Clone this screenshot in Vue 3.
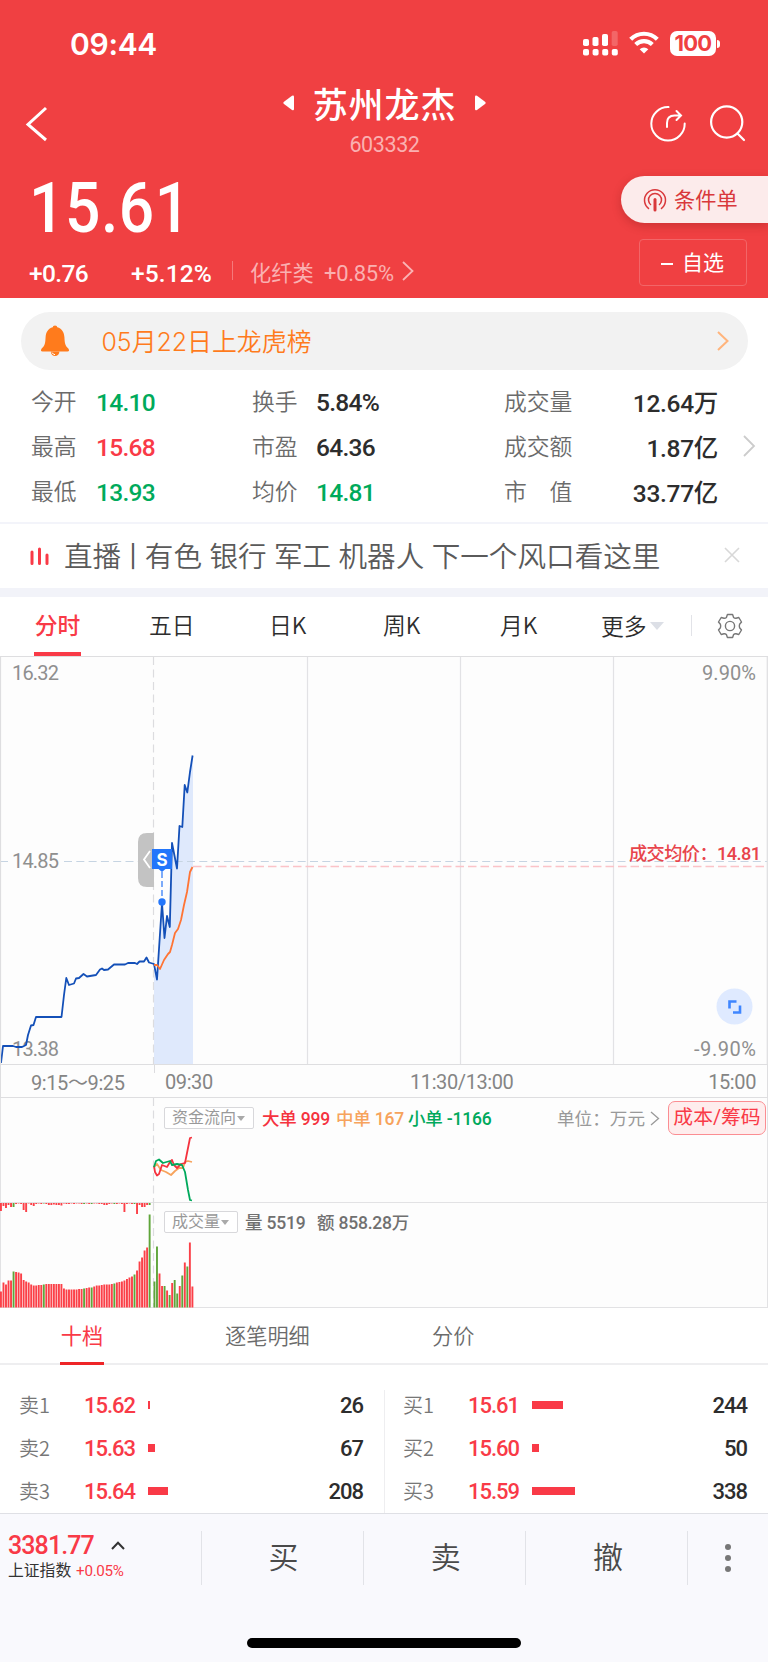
<template>
  <div class="page">
    <header class="header">
      <div class="status-bar">
        <span class="clock">09:44</span>
        <div class="status-icons">
          <svg width="36" height="26" viewBox="0 0 36 26" fill="#fff">
            <rect x="0" y="8" width="6" height="7" rx="1.8" />
            <rect x="9.500" y="6" width="6" height="9" rx="1.8" />
            <rect x="19" y="3" width="6" height="12" rx="1.8" />
            <rect x="28.700" y="0" width="6" height="15" rx="1.8" opacity="0.2" />
            <rect v-for="n in 4" :key="n" :x="(n - 1) * 9.6" y="18" width="6" height="6.500" rx="1.8" />
          </svg>
          <svg class="wifi" width="30" height="24" viewBox="0 0 30 24" fill="none" stroke="#fff" stroke-width="4.200">
            <path d="M1.700 8.200a19 19 0 0 1 26.600 0" />
            <path d="M6.700 13.500a12 12 0 0 1 16.600 0" />
            <path d="M15 22.500l-4.300-4.300a6.200 6.200 0 0 1 8.600 0z" fill="#fff" stroke="none" />
          </svg>
          <span class="battery">100</span>
          <span class="battery-tip"></span>
        </div>
      </div>

      <div class="nav">
        <svg class="back" width="24" height="36" viewBox="0 0 24 36" fill="none" stroke="#fff" stroke-width="3">
          <path d="M21 2L3 18.500L21 34" />
        </svg>
        <div class="nav-title">
          <div class="stock-name">
            <svg width="12" height="16" viewBox="0 0 12 16" fill="#fff"><path d="M1 6.800L9 .8Q11 0 11 2V14Q11 16 9 15L1 9Q-.3 8 1 6.800z" /></svg>
            <span>苏州龙杰</span>
            <svg width="12" height="16" viewBox="0 0 12 16" fill="#fff"><path d="M11 6.800L3 .8Q1 0 1 2V14Q1 16 3 15L11 9Q12.300 8 11 6.800z" /></svg>
          </div>
          <div class="stock-code">603332</div>
        </div>
        <div class="nav-icons">
          <svg width="38" height="38" viewBox="0 0 38 38" fill="none" stroke="#fff" stroke-width="2" stroke-linecap="round">
            <path d="M19.500 2.100A16.700 16.700 0 1 0 35.700 18.500" />
            <path d="M18 22V18Q18 10.500 25.500 10.500H31.500M27.500 6L32 10.500L27.500 15" />
          </svg>
          <svg width="38" height="38" viewBox="0 0 38 38" fill="none" stroke="#fff" stroke-width="2.200" stroke-linecap="round">
            <circle cx="17.700" cy="17" r="15.600" />
            <path d="M28.500 28.500L35 35" />
          </svg>
        </div>
      </div>

      <div class="quote">
        <div class="quote-left">
          <div class="price">15.61</div>
          <div class="change-row">
            <span class="change">+0.76</span>
            <span class="change pct">+5.12%</span>
            <i class="sep"></i>
            <span class="sector">化纤类</span>
            <span class="sector-pct">+0.85%</span>
            <svg width="12" height="20" viewBox="0 0 12 20" fill="none" stroke="#fab3b4" stroke-width="1.800"><path d="M1 1L10.500 10L1 19" /></svg>
          </div>
        </div>
        <div class="quote-actions">
          <button class="cond-btn">
            <svg width="24" height="24" viewBox="0 0 24 24" fill="none" stroke="#d9383b" stroke-width="1.500">
              <path d="M6 20.800A10.500 10.500 0 1 1 18 20.800" />
              <path d="M8 17A6.500 6.500 0 1 1 16 17" />
              <path d="M12 11.500V22" stroke-width="3" stroke-linecap="round" />
            </svg>
            <span>条件单</span>
          </button>
          <button class="fav-btn"><i></i><span>自选</span></button>
        </div>
      </div>
    </header>

    <div class="notice">
      <svg width="30" height="32" viewBox="0 0 30 32" fill="#ff7b1c">
        <circle cx="15" cy="2.800" r="2.300" />
        <path d="M15 2C21 2 24 6.500 24.400 12C24.700 18 25 20.500 28.500 23.800Q30 26.500 27.500 26.500H2.500Q0 26.500 1.500 23.800C5 20.500 5.300 18 5.600 12C6 6.500 9 2 15 2z" />
        <path d="M10.800 26.500a4.300 4.600 0 0 0 8.600 0z" />
        <path d="M12 27.500q1 2 3 2.200" fill="none" stroke="#fff" stroke-width="1" />
      </svg>
      <span>05月22日上龙虎榜</span>
      <svg class="notice-arrow" width="12" height="20" viewBox="0 0 12 20" fill="none" stroke="#ffb47c" stroke-width="2"><path d="M1 1L10.500 10L1 19" /></svg>
    </div>

    <section class="stats">
      <div v-for="(row, i) in stats" :key="i" class="stats-row">
        <template v-for="cell in row" :key="cell.label">
          <span class="label">{{ cell.label }}</span>
          <span class="value" :class="cell.tone">{{ cell.value }}</span>
        </template>
      </div>
      <svg class="stats-arrow" width="13" height="22" viewBox="0 0 13 22" fill="none" stroke="#ccc" stroke-width="1.800"><path d="M1 1L11 11L1 21" /></svg>
    </section>

    <div class="live">
      <svg width="20" height="20" viewBox="0 0 20 20" stroke="#f93a47" stroke-width="3" stroke-linecap="round"><path d="M2 6V17.500M9.500 3V17.500M17 9V17.500" /></svg>
      <p>直播<span class="bar">丨</span>有色 银行 军工 机器人 下一个风口看这里</p>
      <svg class="close" width="16" height="16" viewBox="0 0 16 16" stroke="#d8d8d8" stroke-width="1.600"><path d="M1 1L15 15M15 1L1 15" /></svg>
    </div>

    <nav class="period-tabs">
      <span v-for="tab in periods" :key="tab" :class="{ active: tab === '分时' }">{{ tab }}</span>
      <span class="more">更多<i></i></span>
      <svg class="gear" width="26" height="26" viewBox="0 0 26 26" fill="none" stroke="#777" stroke-width="1.400" stroke-linejoin="round">
        <circle cx="13" cy="13" r="4.600" />
        <path d="M10.400 1.500H15.600L16.600 4.500Q17.500 5.300 19 5.200L21.800 4.500L24.500 9L22.600 11.300Q22 13 22.600 14.700L24.500 17L21.800 21.500L19 20.800Q17.500 20.700 16.600 21.500L15.600 24.500H10.400L9.400 21.500Q8.500 20.700 7 20.800L4.200 21.500L1.500 17L3.400 14.700Q4 13 3.400 11.300L1.500 9L4.200 4.500L7 5.200Q8.500 5.300 9.400 4.500z" />
      </svg>
    </nav>

    <svg class="price-chart" width="768" height="408" viewBox="0 656 768 408">
      <g stroke="#e2e2e5" stroke-width="1.200">
        <path v-for="x in [307.5, 460.5, 613.5]" :key="x" :d="`M${x} 656V1064`" />
      </g>
      <path :d="areaPath" fill="#dfe9fc" />
      <path d="M153.500 657V1064" class="split" />
      <path d="M1 861.500H8M64 861.500H767" stroke="#c6d4e2" stroke-width="1.200" stroke-dasharray="8 4.300" />
      <path d="M193 866.500H767" stroke="#fbc3c8" stroke-width="1.400" stroke-dasharray="8.500 4" />
      <g class="axis">
        <text x="12" y="680" textLength="47">16.32</text>
        <text x="12" y="868" textLength="47">14.85</text>
        <text x="12" y="1056" textLength="47">13.38</text>
        <text x="702" y="680" textLength="54">9.90%</text>
        <text x="694" y="1056" textLength="62">-9.90%</text>
      </g>
      <path d="M154 833H147Q138 833 138 842V878Q138 887 147 887H154z" fill="#c3c3c3" />
      <path :d="pricePath" class="line" stroke="#1450b8" />
      <path :d="avgPath" class="line" stroke="#ff7434" />
      <path d="M150 851L144 859.500L150 868" fill="none" stroke="#fff" stroke-width="1.800" />
      <path d="M162 872V900" stroke="#5c96f8" stroke-width="1.600" stroke-dasharray="6 3" />
      <circle cx="162" cy="902" r="3.700" fill="#2376fb" />
      <path d="M152 849H172V869H165.500L162 872L158.500 869H152z" fill="#2376fb" />
      <text x="162" y="865.500" class="mark">S</text>
      <text x="629" y="860" class="avg-label" textLength="132">成交均价：14.81</text>
      <circle cx="734.500" cy="1006.500" r="18" fill="#dfeaff" />
      <path d="M729.500 1008.500V1001.500H736.500M733 1012.500H740V1005.500" fill="none" stroke="#3f86ff" stroke-width="2.600" />
      <path d="M0 656.500H768M.5 656V1064M767.300 656V1064" stroke="#dedee0" stroke-width="1.200" fill="none" />
    </svg>

    <div class="time-axis">
      <span class="t1">9:15～9:25</span>
      <span class="t2">09:30</span>
      <span class="t3">11:30/13:00</span>
      <span class="t4">15:00</span>
    </div>

    <section class="pane">
      <svg class="pane-chart" width="768" height="105" viewBox="0 1098 768 105">
        <path d="M153.500 1098V1203" class="split" />
        <path :d="toPath(flows.mid)" class="line" stroke="#f7a35c" />
        <path :d="toPath(flows.big)" class="line" stroke="#f5333f" />
        <path :d="toPath(flows.small)" class="line" stroke="#00a95c" />
      </svg>
      <div class="pane-head">
        <span class="picker wide">资金流向<i></i></span>
        <span class="legend big">大单 999</span>
        <span class="legend mid">中单 167</span>
        <span class="legend small">小单 -1166</span>
        <span class="unit">单位：万元</span>
        <svg width="10" height="15" viewBox="0 0 10 15" fill="none" stroke="#999" stroke-width="1.300"><path d="M1 1L8.500 7.500L1 14" /></svg>
        <button class="cost-btn">成本/筹码</button>
      </div>
    </section>

    <section class="pane volume">
      <svg class="pane-chart" width="768" height="105" viewBox="0 1203 768 105">
        <path d="M153.500 1203V1308" class="split" />
        <rect v-for="(b, i) in bars" :key="i" :x="b.x" :y="b.y" width="1.900" :height="b.h" :fill="b.up ? '#fb4048' : '#5fa53a'" />
      </svg>
      <div class="pane-head">
        <span class="picker">成交量<i></i></span>
        <span class="legend vol">量 5519</span>
        <span class="legend amount">额 858.28万</span>
      </div>
    </section>

    <nav class="book-tabs">
      <span class="active">十档</span>
      <span>逐笔明细</span>
      <span>分价</span>
    </nav>

    <section class="book">
      <div v-for="(side, i) in book" :key="i" class="book-side">
        <div v-for="o in side" :key="o.label" class="order">
          <span class="order-label">{{ o.label }}</span>
          <span class="order-price">{{ o.price }}</span>
          <i class="order-bar" :style="{ width: o.bar + 'px' }"></i>
          <span class="order-qty">{{ o.qty }}</span>
        </div>
      </div>
    </section>

    <footer class="footer">
      <div class="toolbar">
        <div class="index">
          <div class="index-value">
            3381.77
            <svg width="14" height="9" viewBox="0 0 14 9" fill="none" stroke="#333" stroke-width="2"><path d="M1 8L7 1.800L13 8" /></svg>
          </div>
          <div class="index-name">上证指数 <b>+0.05%</b></div>
        </div>
        <span class="action">买</span>
        <span class="action">卖</span>
        <span class="action">撤</span>
        <div class="dots"><i></i><i></i><i></i></div>
      </div>
      <div class="home-bar"></div>
    </footer>
  </div>
</template>

<script setup>
const stats = [
  [
    { label: '今开', value: '14.10', tone: 'down' },
    { label: '换手', value: '5.84%' },
    { label: '成交量', value: '12.64万' },
  ],
  [
    { label: '最高', value: '15.68', tone: 'up' },
    { label: '市盈', value: '64.36' },
    { label: '成交额', value: '1.87亿' },
  ],
  [
    { label: '最低', value: '13.93', tone: 'down' },
    { label: '均价', value: '14.81', tone: 'down' },
    { label: '市　值', value: '33.77亿' },
  ],
];

const periods = ['分时', '五日', '日K', '周K', '月K'];

const book = [
  [
    { label: '卖1', price: '15.62', bar: 2, qty: 26 },
    { label: '卖2', price: '15.63', bar: 7, qty: 67 },
    { label: '卖3', price: '15.64', bar: 20, qty: 208 },
  ],
  [
    { label: '买1', price: '15.61', bar: 31, qty: 244 },
    { label: '买2', price: '15.60', bar: 7, qty: 50 },
    { label: '买3', price: '15.59', bar: 43, qty: 338 },
  ],
];

const toPath = (points) => 'M' + points.map((p) => p.join(' ')).join('L');

// call auction, 9:15 - 9:25
const auction = [
  [1, 1063], [3, 1046], [13, 1046], [16, 1047], [22, 1047], [26, 1045], [28, 1035], [31, 1025.5], [33.5, 1025],
  [36, 1017], [61.5, 1017], [64, 995], [66.3, 978], [69, 985], [74, 983.5], [76, 978.5], [79, 978], [83.5, 974],
  [87, 976.5], [96, 975], [100, 969.5], [102, 968.5], [104, 970], [108, 969.5], [114, 964.5], [125, 964.5],
  [128, 963], [135, 963], [137, 964], [139.5, 961.5], [144, 961.5], [146.5, 957.5], [149, 962.5], [154, 964],
];
// continuous trading
const trading = [
  [154, 964], [157, 979.5], [162, 903], [164.5, 938], [167, 916], [169.8, 927], [172, 843], [177, 868.5],
  [179.5, 826], [182.3, 827], [184.7, 785], [187.3, 792.5], [190, 772], [192.6, 755.5],
];
const average = [
  [154, 965], [157, 965], [160, 969], [164, 960], [168, 954], [170, 952], [172, 945], [175, 933], [178, 929],
  [181, 920], [184, 905], [187, 892], [190, 872], [192.5, 867],
];

const pricePath = toPath([...auction, ...trading]);
const avgPath = toPath(average);
const areaPath = toPath([...trading, [193, 755], [193, 1064], [154, 1064]]) + 'z';

const flows = {
  big: [[154, 1166], [155, 1172], [157, 1175.5], [159, 1174], [162, 1165], [167, 1167], [170, 1162], [172, 1160], [174, 1165], [177, 1168], [181, 1164], [185, 1163], [188, 1148], [190, 1138], [192, 1137.5]],
  mid: [[154, 1167], [157, 1164], [161, 1170], [166, 1172], [171, 1175], [175, 1171], [179, 1168], [183, 1168], [185, 1162], [188, 1161], [192, 1162]],
  small: [[154, 1167], [156, 1161], [159, 1159.5], [163, 1163], [170, 1161], [172, 1165], [177, 1164], [182, 1165], [185, 1172], [188, 1190], [190, 1200], [192, 1200.5]],
};

const auctionVol = [
  16, 25, 23, 27, 27, 36, 35.5, 35, 34, 27.5, 26, 25, 23, 22, 22, 22.5, 22.5, 23, 23.5, 23.5, 23.5, 23.5, 23.5, 23.5, 23.5,
  19, 18, 18, 18, 18, 18, 18.5, 18.5, 19, 19.5, 20, 20, 21, 22, 22, 22.5, 23, 23, 23, 23.5, 24, 25, 25.5, 26, 27, 28.5,
  30, 31, 33, 37, 46, 50, 57, 60, 93,
];
const auctionGreen = [5, 17, 33, 36, 45, 53, 59];
const unmatched = [
  8, 3, 5, 2, 4, 4, 1, 0.5, 1, 7, 9, 0.5, 2, 3, 1, 0.5, 1, 0.5, 1, 2, 2, 1.5, 2, 2, 2.5, 0.5, 1, 1, 0.5, 1, 0.5, 0.5, 1,
  1, 0.5, 1, 1, 0.5, 0.5, 1, 1, 2, 2, 1, 0.5, 1, 1, 0.5, 1, 9, 1, 0.5, 1, 1, 11, 2, 4, 4, 2, 2,
];
const tradingVol = [26, 61, 34, 21.5, 21.5, 17, 12.5, 24.5, 27.5, 14, 21.5, 32, 45, 41, 65, 21];
const tradingGreen = [0, 1, 4, 6, 8, 9, 11, 13];

const bars = [
  ...auctionVol.map((h, i) => ({ x: i * 2.52, y: 1307.5 - h, h, up: !auctionGreen.includes(i) })),
  ...unmatched.map((h, i) => ({ x: i * 2.52, y: 1203, h, up: !auctionGreen.includes(i) })),
  ...tradingVol.map((h, i) => ({ x: 153.5 + i * 2.53, y: 1307.5 - h, h, up: !tradingGreen.includes(i) })),
];
</script>

<style>
body { margin: 0; background: #fff; }
</style>

<style scoped>
.page { width: 768px; height: 1662px; overflow: hidden; background: #fff; color: #2d2d2d; font-family: Roboto, "Noto Sans CJK SC", sans-serif; white-space: nowrap; }
.page * { box-sizing: border-box; }
svg { display: block; flex: none; }
button { font-family: inherit; padding: 0; border: 0; white-space: nowrap; }

/* header */
.header { height: 298px; background: #f04042; color: #fff; display: flex; flex-direction: column; }
.status-bar { height: 83px; display: flex; justify-content: space-between; padding: 25px 48px 0 70px; }
.clock { font: 600 30px/38px Inter, sans-serif; letter-spacing: -0.3px; }
.status-icons { display: flex; align-items: flex-start; padding-top: 6px; }
.wifi { margin: 0 0 0 10px; }
.battery { width: 46px; height: 25px; margin-left: 11px; border-radius: 7px; background: #fff; color: #f04042; font: 700 22px/25px Inter, sans-serif; text-align: center; letter-spacing: -0.8px; }
.battery-tip { width: 3px; height: 8px; margin: 9px 0 0 1px; border-radius: 0 4px 4px 0; background: #fff; }
.nav { height: 85px; display: flex; justify-content: space-between; padding: 0 21px 0 25px; }
.back { margin-top: 23px; width: 24px; margin-right: 71px; }
.nav-title { text-align: center; }
.stock-name { display: flex; align-items: center; gap: 18px; height: 42px; font-size: 35px; font-weight: 500; letter-spacing: 0.9px; }
.stock-name span { margin-top: -4px; }
.stock-name svg { margin-top: -3px; }
.stock-code { font-size: 21.500px; line-height: 24px; margin-top: 8px; letter-spacing: -0.4px; color: #fab0b1; }
.nav-icons { display: flex; gap: 22px; margin-top: 22px; }
.quote { display: flex; justify-content: space-between; }
.quote-left { padding-left: 29px; }
.price { height: 79px; padding-top: 4px; font-size: 70px; line-height: 72px; font-weight: 500; letter-spacing: 0.6px; transform: scaleX(0.89); transform-origin: 0 0; }
.change-row { display: flex; align-items: center; height: 50px; font-size: 24.500px; }
.change { width: 102px; font-weight: 500; letter-spacing: -0.6px; padding-top: 2px; }
.pct { width: 101px; letter-spacing: 0.1px; }
.sep { width: 1px; height: 19px; margin-right: 17px; background: #f5797b; margin-top: -3px; }
.sector { font-size: 21.200px; color: #fab0b1; width: 74px; margin-top: -2px; }
.sector-pct { font-size: 22px; color: #fab0b1; width: 78px; letter-spacing: -0.3px; padding-top: 2px; }
.change-row svg { margin-top: -3px; }
.quote-actions { display: flex; flex-direction: column; align-items: flex-end; padding-top: 8px; }
.cond-btn { display: flex; align-items: center; gap: 7px; width: 147px; height: 47px; padding-left: 22px; border-radius: 24px 0 0 24px; background: #fcebeb; color: #d9383b; font-size: 21.200px; box-shadow: 0 3px 10px rgba(120, 20, 20, 0.3); }
.cond-btn span { margin-top: -3px; }
.fav-btn { display: flex; align-items: center; gap: 9px; width: 108px; height: 47px; margin: 16px 21px 0 0; padding-left: 21px; border: 1px solid #f26668; border-radius: 4px; background: none; color: #fff; font-size: 21px; }
.fav-btn span { margin-top: -4px; }
.fav-btn i { width: 12px; height: 2px; background: #fff; margin-top: 2px; }

/* notice and stats */
.notice { display: flex; align-items: center; width: 727px; height: 58px; margin: 14px 0 0 20.500px; padding: 0 19px 0 19px; border-radius: 29px; background: #f2f2f2; color: #ff7b1c; font-family: Inter, "Noto Sans CJK SC", sans-serif; font-size: 24.900px; font-weight: 350; }
.notice span { margin: -2px 0 0 32px; }
.notice-arrow { margin-left: auto; }
.stats { position: relative; height: 154px; padding-top: 9px; border-bottom: 2px solid #f3f4fa; }
.stats-row { display: grid; grid-template-columns: 65px 156px 64px 188px 80px 134px; align-items: center; height: 45px; padding-left: 31px; }
.label { font-family: "Noto Sans CJK SC", sans-serif; font-size: 22.800px; font-weight: 350; color: #6b6b6b; margin-top: -2px; }
.value { font-size: 24.500px; font-weight: 500; letter-spacing: -0.7px; padding-top: 1px; }
.value:last-child { text-align: right; padding-top: 0; letter-spacing: -0.3px; }
.up { color: #f93a47; }
.down { color: #00aa5b; }
.stats-arrow { position: absolute; right: 12px; top: 65px; }
.live { display: flex; align-items: center; height: 64px; padding: 0 28px 0 30px; color: #5a5a5a; }
.live p { margin: -3px 0 0 14px; font-family: "Noto Sans CJK SC", sans-serif; font-size: 28.600px; font-weight: 350; word-spacing: 1px; }
.bar { margin: 0 -2.500px; }
.close { margin-left: auto; margin-top: -2px; }

/* period tabs */
.period-tabs { display: flex; height: 68px; border-top: 9px solid #f2f3f9; align-items: stretch; font-family: "Noto Sans CJK SC", sans-serif; font-size: 22.800px; line-height: 56px; font-weight: 350; padding-left: 34px; }
.period-tabs span { width: 117px; }
.period-tabs span:nth-child(2) { width: 120px; }
.period-tabs span:nth-child(3) { width: 114px; }
.period-tabs span:nth-child(5) { width: 101px; }
.period-tabs .active { width: 47px; margin-right: 68px; border-bottom: 4px solid #f93a47; color: #f93a47; font-weight: 500; text-align: center; }
.period-tabs .more { display: flex; align-items: center; width: 91px; margin-top: -2px; }
.more i { margin-left: 3px; border: 7.500px solid transparent; border-top: 8px solid #dcdfe6; border-bottom: 0; }
.more::after { content: ""; margin-left: auto; width: 1px; height: 21px; background: #e2e3e8; }
.gear { margin: 16px 0 0 25px; }

/* charts */
.price-chart { background: #fdfdfd; }
.split { stroke: #dcdcdf; stroke-width: 1.200; stroke-dasharray: 8 4.500; fill: none; }
.line { fill: none; stroke-width: 1.800; stroke-linejoin: round; }
.axis { font-size: 20px; fill: #8f8f8f; }
.mark { font: 700 17px Inter, sans-serif; fill: #fff; text-anchor: middle; }
.avg-label { font-size: 18.200px; font-weight: 500; fill: #e8444b; }
.time-axis { display: flex; align-items: center; height: 34px; border: 1px solid #dedee0; color: #858585; font-size: 20px; letter-spacing: -0.4px; padding: 1px 11px 0 30px; background: linear-gradient(#dcdcdf, #dcdcdf) 152.500px 0 / 1px 8px no-repeat #fdfdfd; }
.t1 { width: 134px; letter-spacing: -0.4px; }
.t2 { width: 245px; }
.t3 { flex: 1; }
.pane { position: relative; height: 105px; border: 1px solid #e2e2e4; border-top: 0; background: #fdfdfd; }
.pane-chart { position: absolute; left: -1px; top: 0; }
.volume { height: 105px; }
.pane-head { position: relative; display: flex; align-items: center; height: 40px; padding-left: 163px; font-size: 18px; }
.volume .pane-head { height: 38px; }
.picker { display: flex; align-items: center; gap: 1px; width: 74px; height: 22px; padding-left: 7px; border: 1px solid #d8d8db; border-radius: 2px; background: #fff; color: #999; font-size: 16px; line-height: 20px; }
.wide { width: 90px; }
.picker i { border: 4.500px solid transparent; border-top: 5px solid #aaa; border-bottom: 0; }
.legend { font-weight: 500; letter-spacing: -0.2px; font-size: 17.500px; margin-top: -2px; }
.big { color: #f5333f; width: 74px; margin-left: 8px; }
.mid { color: #f7a35c; width: 72px; }
.small { color: #00a95c; }
.unit { margin-left: auto; margin-right: 5px; color: #999; font-size: 17.600px; margin-top: -1px; }
.cost-btn { width: 98px; height: 34px; margin: 0 1px 0 8px; border: 1.500px solid #fb8d92; border-radius: 7px; background: #feeded; color: #f93a47; font-size: 19.800px; line-height: 28px; }
.vol { margin-left: 7px; width: 72px; color: #707070; }
.amount { color: #707070; }

/* order book */
.book-tabs { display: flex; height: 57px; padding-left: 60px; border-bottom: 2px solid #eeeef0; font-family: "Noto Sans CJK SC", sans-serif; font-size: 21.200px; line-height: 53px; font-weight: 350; color: #6b6b6b; }
.book-tabs span { width: 207px; }
.book-tabs .active { width: 44px; height: 57px; margin-right: 121px; border-bottom: 3px solid #ee2528; color: #f93a47; font-weight: 400; text-align: center; }
.book { display: flex; height: 148px; padding-top: 25px; }
.book-side { width: 384px; height: 123px; overflow: hidden; padding-left: 19px; }
.book-side + .book-side { border-left: 1px solid #eeeef0; padding-left: 18px; }
.order { display: flex; align-items: center; height: 43px; }
.order:first-child { margin-top: -6px; }
.order-label { width: 65px; font-family: "Noto Sans CJK SC", sans-serif; font-size: 20px; font-weight: 350; color: #777; margin-top: -2px; }
.order-price { width: 64px; font-size: 22px; font-weight: 500; color: #f93a47; letter-spacing: -1px; }
.order-bar { height: 8px; background: #f93a47; margin-top: -2px; }
.order-qty { margin-left: auto; padding-right: 21px; font-size: 22px; font-weight: 500; letter-spacing: -1px; }

/* footer */
.footer { height: 149px; background: #f9f9fd; border-top: 1px solid #dfe0e5; }
.toolbar { display: flex; height: 54px; margin-top: 17px; }
.index { width: 200.500px; padding-left: 8px; }
.index-value { display: flex; align-items: center; gap: 17px; height: 28px; color: #f93a47; font-size: 25px; font-weight: 500; letter-spacing: -0.9px; }
.index-name { font-size: 15.800px; line-height: 24px; color: #333; }
.index-name b { font-weight: 400; font-size: 15.200px; color: #f93a47; letter-spacing: -0.3px; margin-left: 1px; }
.action { width: 162.200px; border-left: 1px solid #e2e3e8; text-align: center; font: 350 30px/49px "Noto Sans CJK SC", sans-serif; color: #4a4a4a; padding-left: 3px; }
.dots { flex: 1; border-left: 1px solid #e2e3e8; display: flex; flex-direction: column; align-items: center; justify-content: center; gap: 5px; }
.dots i { width: 6px; height: 6px; border-radius: 50%; background: #777; }
.home-bar { width: 274px; height: 10px; margin: 53px auto 0; border-radius: 5px; background: #000; }
</style>
